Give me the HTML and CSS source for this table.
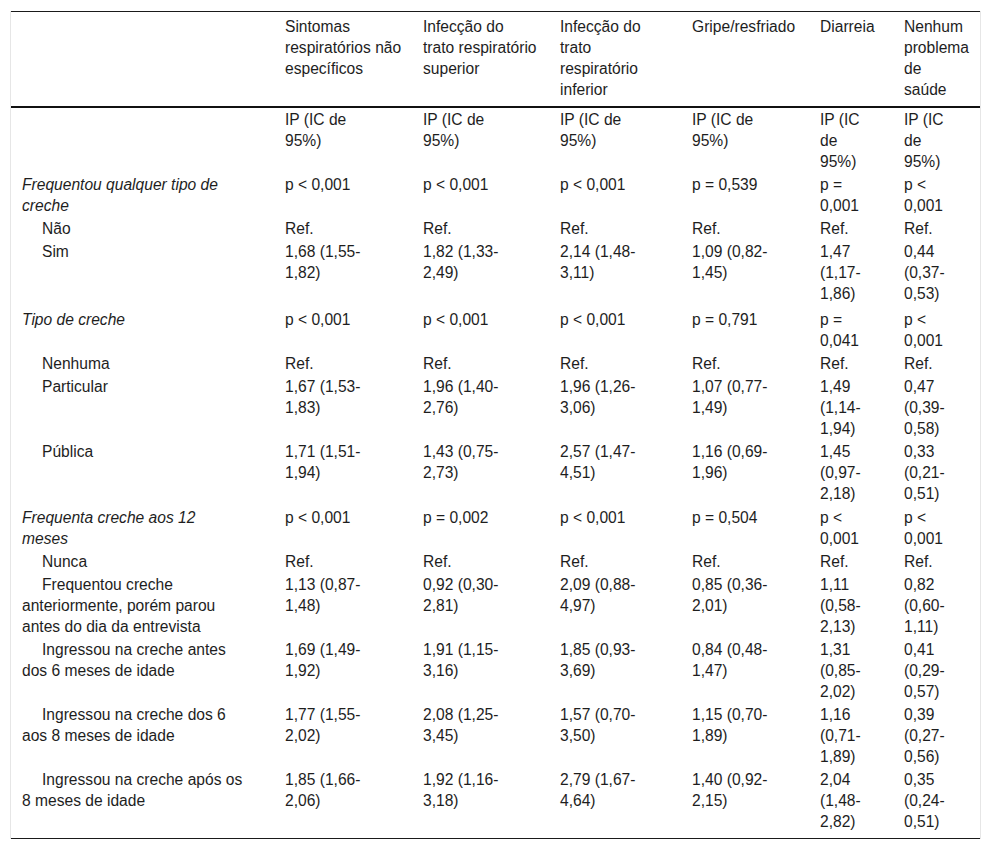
FILE: index.html
```html
<!DOCTYPE html>
<html lang="pt">
<head>
<meta charset="utf-8">
<link rel="stylesheet" href="styles.css">
</head>
<body>
<div class="wrap">
<table class="data">
<colgroup>
<col class="c1"><col class="c2"><col class="c3"><col class="c4"><col class="c5"><col class="c6"><col class="c7">
</colgroup>
<thead>
<tr>
<th></th>
<th>Sintomas<br>respiratórios não<br>específicos</th>
<th>Infecção do<br>trato respiratório<br>superior</th>
<th>Infecção do<br>trato<br>respiratório<br>inferior</th>
<th>Gripe/resfriado</th>
<th>Diarreia</th>
<th>Nenhum<br>problema<br>de<br>saúde</th>
</tr>
</thead>
<tbody>
<tr>
<td></td>
<td>IP (IC de<br>95%)</td><td>IP (IC de<br>95%)</td><td>IP (IC de<br>95%)</td><td>IP (IC de<br>95%)</td><td>IP (IC<br>de<br>95%)</td><td>IP (IC<br>de<br>95%)</td>
</tr>
<tr>
<td class="grp">Frequentou qualquer tipo de<br>creche</td>
<td>p &lt; 0,001</td><td>p &lt; 0,001</td><td>p &lt; 0,001</td><td>p = 0,539</td><td>p =<br>0,001</td><td>p &lt;<br>0,001</td>
</tr>
<tr>
<td class="sub">Não</td>
<td>Ref.</td><td>Ref.</td><td>Ref.</td><td>Ref.</td><td>Ref.</td><td>Ref.</td>
</tr>
<tr class="pad3">
<td class="sub">Sim</td>
<td>1,68 (1,55-<br>1,82)</td><td>1,82 (1,33-<br>2,49)</td><td>2,14 (1,48-<br>3,11)</td><td>1,09 (0,82-<br>1,45)</td><td>1,47<br>(1,17-<br>1,86)</td><td>0,44<br>(0,37-<br>0,53)</td>
</tr>
<tr>
<td class="grp">Tipo de creche</td>
<td>p &lt; 0,001</td><td>p &lt; 0,001</td><td>p &lt; 0,001</td><td>p = 0,791</td><td>p =<br>0,041</td><td>p &lt;<br>0,001</td>
</tr>
<tr>
<td class="sub">Nenhuma</td>
<td>Ref.</td><td>Ref.</td><td>Ref.</td><td>Ref.</td><td>Ref.</td><td>Ref.</td>
</tr>
<tr>
<td class="sub">Particular</td>
<td>1,67 (1,53-<br>1,83)</td><td>1,96 (1,40-<br>2,76)</td><td>1,96 (1,26-<br>3,06)</td><td>1,07 (0,77-<br>1,49)</td><td>1,49<br>(1,14-<br>1,94)</td><td>0,47<br>(0,39-<br>0,58)</td>
</tr>
<tr class="pad1">
<td class="sub">Pública</td>
<td>1,71 (1,51-<br>1,94)</td><td>1,43 (0,75-<br>2,73)</td><td>2,57 (1,47-<br>4,51)</td><td>1,16 (0,69-<br>1,96)</td><td>1,45<br>(0,97-<br>2,18)</td><td>0,33<br>(0,21-<br>0,51)</td>
</tr>
<tr>
<td class="grp">Frequenta creche aos 12<br>meses</td>
<td>p &lt; 0,001</td><td>p = 0,002</td><td>p &lt; 0,001</td><td>p = 0,504</td><td>p &lt;<br>0,001</td><td>p &lt;<br>0,001</td>
</tr>
<tr>
<td class="sub">Nunca</td>
<td>Ref.</td><td>Ref.</td><td>Ref.</td><td>Ref.</td><td>Ref.</td><td>Ref.</td>
</tr>
<tr>
<td class="sub">Frequentou creche<br>anteriormente, porém parou<br>antes do dia da entrevista</td>
<td>1,13 (0,87-<br>1,48)</td><td>0,92 (0,30-<br>2,81)</td><td>2,09 (0,88-<br>4,97)</td><td>0,85 (0,36-<br>2,01)</td><td>1,11<br>(0,58-<br>2,13)</td><td>0,82<br>(0,60-<br>1,11)</td>
</tr>
<tr>
<td class="sub">Ingressou na creche antes<br>dos 6 meses de idade</td>
<td>1,69 (1,49-<br>1,92)</td><td>1,91 (1,15-<br>3,16)</td><td>1,85 (0,93-<br>3,69)</td><td>0,84 (0,48-<br>1,47)</td><td>1,31<br>(0,85-<br>2,02)</td><td>0,41<br>(0,29-<br>0,57)</td>
</tr>
<tr>
<td class="sub">Ingressou na creche dos 6<br>aos 8 meses de idade</td>
<td>1,77 (1,55-<br>2,02)</td><td>2,08 (1,25-<br>3,45)</td><td>1,57 (0,70-<br>3,50)</td><td>1,15 (0,70-<br>1,89)</td><td>1,16<br>(0,71-<br>1,89)</td><td>0,39<br>(0,27-<br>0,56)</td>
</tr>
<tr class="last">
<td class="sub">Ingressou na creche após os<br>8 meses de idade</td>
<td>1,85 (1,66-<br>2,06)</td><td>1,92 (1,16-<br>3,18)</td><td>2,79 (1,67-<br>4,64)</td><td>1,40 (0,92-<br>2,15)</td><td>2,04<br>(1,48-<br>2,82)</td><td>0,35<br>(0,24-<br>0,51)</td>
</tr>
</tbody>
</table>
</div>
</body>
</html>
```

FILE: styles.css
```css
html, body {
  margin: 0;
  padding: 0;
  background: #ffffff;
}

body {
  font-family: "Liberation Sans", Arial, sans-serif;
  font-size: 15.6px;
  line-height: 21px;
  color: #1e1e1e;
}

.wrap {
  margin: 11px 0 0 10px;
  width: 969px;
  border-left: 1px solid #e6e6e6;
  border-right: 1px solid #e6e6e6;
}

.data {
  width: 969px;
  border-collapse: collapse;
  table-layout: fixed;
  border-top: 1px solid #1a1a1a;
  border-bottom: 1px solid #1a1a1a;
}

.c1 { width: 263px; }
.c2 { width: 138px; }
.c3 { width: 137px; }
.c4 { width: 132px; }
.c5 { width: 128px; }
.c6 { width: 84px; }
.c7 { width: 87px; }

.data th,
.data td {
  text-align: left;
  vertical-align: top;
  white-space: nowrap;
  padding: 1px 0 1px 11px;
  font-weight: normal;
}

.data thead th {
  padding-top: 4px;
  padding-bottom: 6px;
  border-bottom: 2px solid #111;
}

.data .grp {
  font-style: italic;
}

.data .sub {
  text-indent: 20px;
}

.data .pad3 td {
  padding-bottom: 4px;
}

.data .pad1 td {
  padding-bottom: 2px;
}

.data .last td {
  padding-bottom: 6px;
}
```
